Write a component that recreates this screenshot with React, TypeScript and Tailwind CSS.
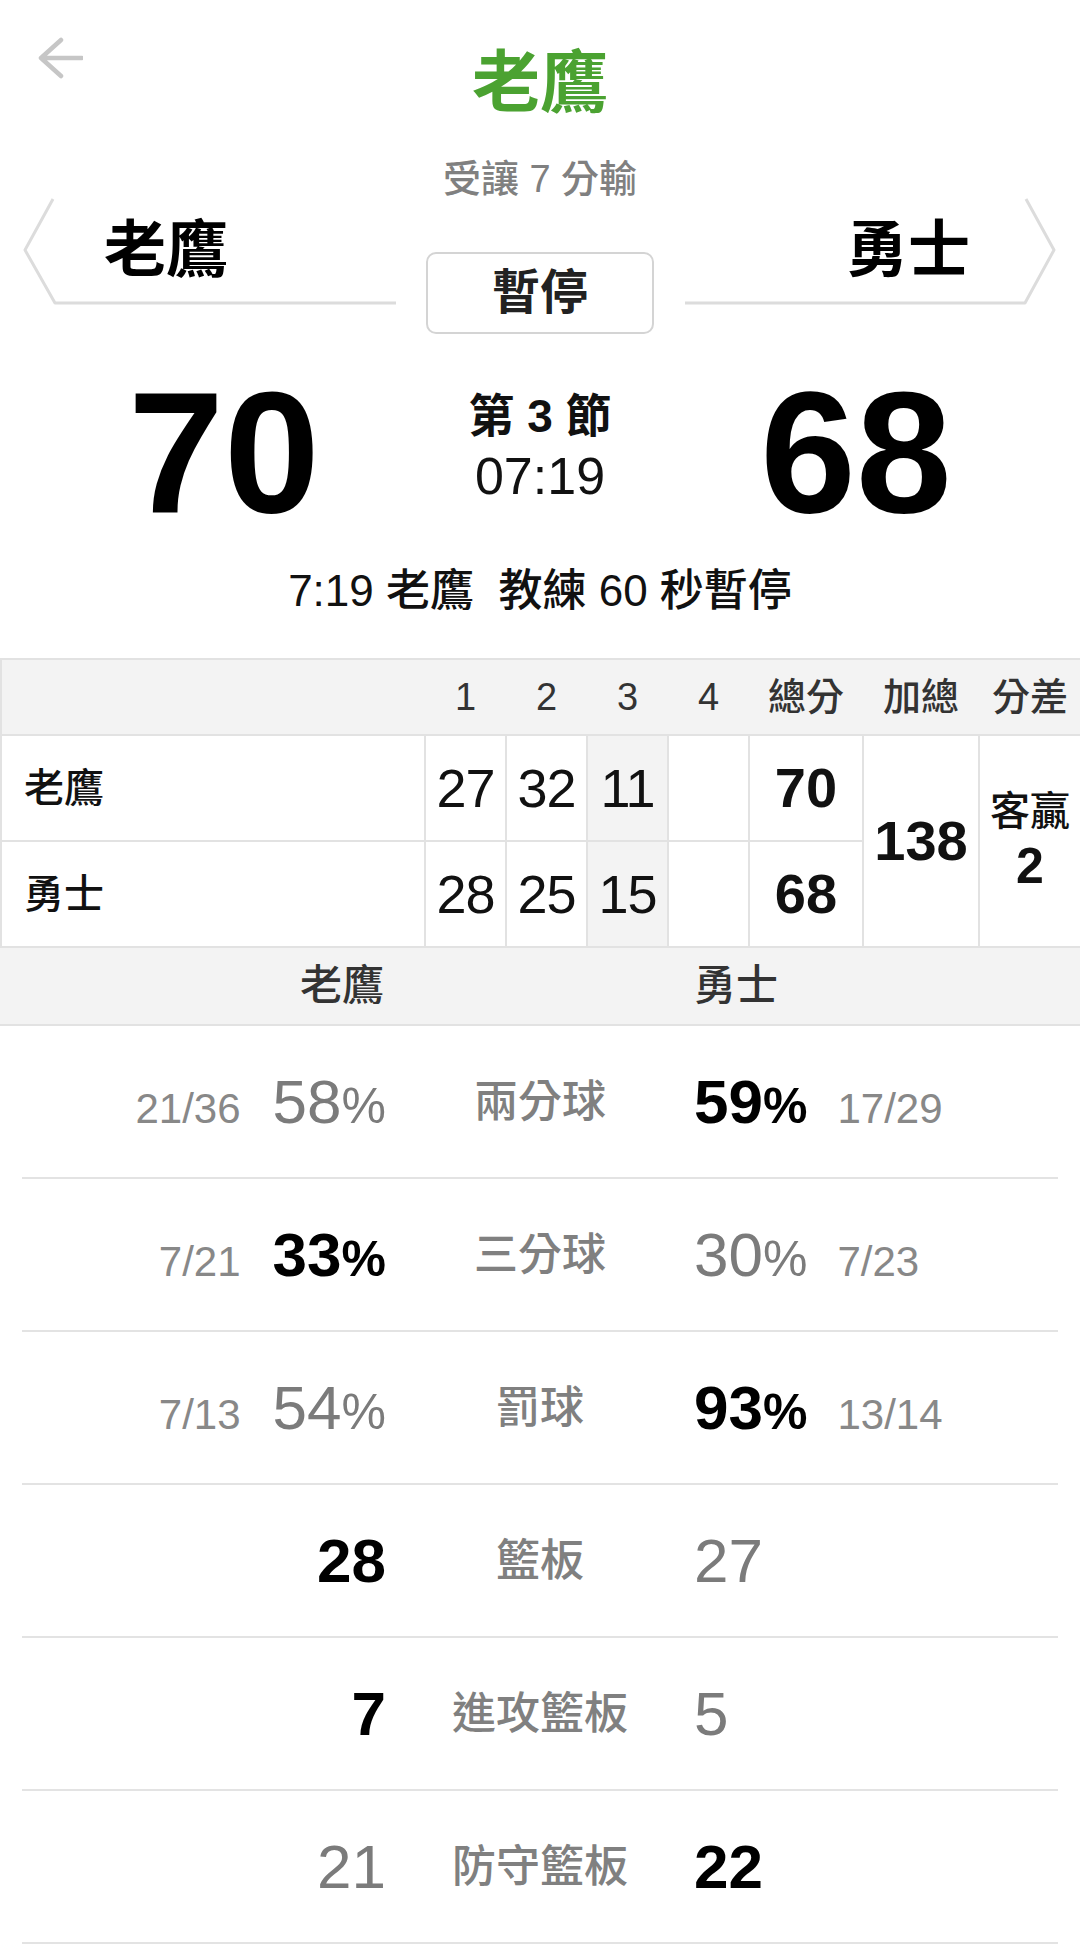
import React from 'react';

const FONT = "font-['Liberation_Sans','Noto_Sans_CJK_TC',sans-serif]";

type Side = { pct?: string; frac?: string; val?: string };
type Stat = { label: string; left: Side; right: Side; win: 'left' | 'right' };

const STATS: Stat[] = [
  { label: '兩分球', left: { pct: '58', frac: '21/36' }, right: { pct: '59', frac: '17/29' }, win: 'right' },
  { label: '三分球', left: { pct: '33', frac: '7/21' }, right: { pct: '30', frac: '7/23' }, win: 'left' },
  { label: '罰球', left: { pct: '54', frac: '7/13' }, right: { pct: '93', frac: '13/14' }, win: 'right' },
  { label: '籃板', left: { val: '28' }, right: { val: '27' }, win: 'left' },
  { label: '進攻籃板', left: { val: '7' }, right: { val: '5' }, win: 'left' },
  { label: '防守籃板', left: { val: '21' }, right: { val: '22' }, win: 'right' },
];

const QUARTERS = [
  { name: '老鷹', q: ['27', '32', '11', ''], total: '70' },
  { name: '勇士', q: ['28', '25', '15', ''], total: '68' },
];

const BackArrow = () => (
  <svg width="46" height="42" viewBox="0 0 46 42" fill="none">
    <path d="M24 3 L4 21 L24 39 M4 21 H45" stroke="#c6c6c6" strokeWidth="4.5" strokeLinecap="round" strokeLinejoin="round" />
  </svg>
);

const Value = ({ side, bold }: { side: Side; bold: boolean }) => {
  const tone = bold ? 'font-bold text-black' : 'text-[#7b7b7b]';
  if (side.val) return <span className={`text-[62px] leading-none ${tone}`}>{side.val}</span>;
  return (
    <span className={`leading-none ${tone}`}>
      <span className="text-[62px]">{side.pct}</span>
      <span className="text-[50px]">%</span>
    </span>
  );
};

const Frac = ({ text }: { text: string }) => (
  <span className="text-[42px] leading-none text-[#888]">{text}</span>
);

export default function App() {
  const cell = 'border-2 border-[#e2e2e2]';
  return (
    <div className={`${FONT} w-[1080px] min-h-[1956px] bg-white text-[#111]`}>
      {/* Header */}
      <header className="grid grid-cols-[120px_1fr_120px] items-start">
        <div className="pt-[37px] pl-[37px]">
          <BackArrow />
        </div>
        <div className="pt-[49px] flex flex-col items-center">
          <h1 className="text-[68px] leading-none font-bold text-[#4ba231]">老鷹</h1>
          <p className="mt-[43px] text-[38px] leading-none font-medium text-[#808080]">受讓 7 分輸</p>
        </div>
        <div />
      </header>

      {/* Teams */}
      <div className="flex items-start">
        <div className="relative w-[410px] h-[108px] pt-[22px] pl-[104px]">
          <svg className="absolute inset-0" width="410" height="108" viewBox="0 0 410 108" fill="none">
            <path d="M53 1 L25 52 L55 105 L396 105" stroke="#dcdcdc" strokeWidth="3" strokeLinejoin="round" />
          </svg>
          <span className="relative text-[62px] leading-none font-bold text-black">老鷹</span>
        </div>
        <div className="ml-[16px] mt-[54px] w-[228px] h-[82px] rounded-[10px] border-2 border-[#d4d4d4] flex items-center justify-center">
          <span className="text-[48px] leading-none font-semibold text-[#222]">暫停</span>
        </div>
        <div className="relative ml-[16px] w-[410px] h-[108px] pt-[22px] pr-[110px] flex justify-end items-start">
          <svg className="absolute inset-0" width="410" height="108" viewBox="0 0 410 108" fill="none">
            <path d="M15 105 L355 105 L384 52 L356 1" stroke="#dcdcdc" strokeWidth="3" strokeLinejoin="round" />
          </svg>
          <span className="relative text-[62px] leading-none font-bold text-black">勇士</span>
        </div>
      </div>

      {/* Score */}
      <div className="mt-[32px] grid grid-cols-[448px_1fr_448px] items-start">
        <div className="text-center text-[172px] leading-none font-bold text-black">70</div>
        <div className="flex flex-col items-center pt-[27px]">
          <span className="text-[46px] leading-none font-semibold text-[#111]">第 3 節</span>
          <span className="mt-[11px] text-[52px] leading-none font-medium text-[#111]">07:19</span>
        </div>
        <div className="text-center text-[172px] leading-none font-bold text-black">68</div>
      </div>

      <p className="mt-[31px] text-center text-[44px] leading-none font-medium text-[#111]">
        7:19 老鷹&nbsp;&nbsp;教練 60 秒暫停
      </p>

      {/* Quarter table */}
      <table className="mt-[45px] w-full table-fixed border-collapse">
        <colgroup>
          <col className="w-[424px]" />
          <col className="w-[81px]" />
          <col className="w-[81px]" />
          <col className="w-[81px]" />
          <col className="w-[81px]" />
          <col className="w-[114px]" />
          <col className="w-[116px]" />
          <col className="w-[102px]" />
        </colgroup>
        <thead>
          <tr className="h-[76px] bg-[#f3f3f3] text-[38px] font-medium text-[#333]">
            <th className={`${cell} border-r-0`} />
            {['1', '2', '3', '4', '總分', '加總', '分差'].map((h) => (
              <th key={h} className="border-y-2 border-[#e2e2e2] font-medium leading-none">{h}</th>
            ))}
          </tr>
        </thead>
        <tbody>
          {QUARTERS.map((row, i) => (
            <tr key={row.name} className="h-[106px]">
              <td className={`${cell} pl-[22px] text-[40px] leading-none font-medium text-[#111]`}>{row.name}</td>
              {row.q.map((v, j) => (
                <td key={j} className={`${cell} text-center text-[54px] tracking-[-1px] leading-none ${j === 2 ? 'bg-[#f3f3f3]' : ''}`}>{v}</td>
              ))}
              <td className={`${cell} text-center text-[56px] leading-none font-bold`}>{row.total}</td>
              {i === 0 && (
                <>
                  <td rowSpan={2} className={`${cell} text-center text-[56px] leading-none font-bold`}>138</td>
                  <td rowSpan={2} className={`${cell} text-center`}>
                    <div className="flex flex-col items-center">
                      <span className="text-[40px] leading-none font-medium">客贏</span>
                      <span className="mt-[10px] text-[50px] leading-none font-bold">2</span>
                    </div>
                  </td>
                </>
              )}
            </tr>
          ))}
        </tbody>
      </table>

      {/* Team stats header */}
      <div className="h-[78px] bg-[#f3f3f3] border-b-2 border-[#e2e2e2] px-[22px] grid grid-cols-[1fr_308px_1fr] items-center text-[42px] leading-none font-medium text-[#333]">
        <span className="text-right pr-[2px]">老鷹</span>
        <span />
        <span>勇士</span>
      </div>

      {/* Stats */}
      <div className="px-[22px]">
        {STATS.map((s) => (
          <div key={s.label} className="h-[153px] border-b-2 border-[#e3e3e3] grid grid-cols-[1fr_308px_1fr] items-center">
            <div className="flex items-baseline justify-end gap-[32px]">
              {s.left.frac && <Frac text={s.left.frac} />}
              <Value side={s.left} bold={s.win === 'left'} />
            </div>
            <div className="text-center text-[44px] leading-none font-medium text-[#808080]">{s.label}</div>
            <div className="flex items-baseline gap-[30px]">
              <Value side={s.right} bold={s.win === 'right'} />
              {s.right.frac && <Frac text={s.right.frac} />}
            </div>
          </div>
        ))}
      </div>
    </div>
  );
}
